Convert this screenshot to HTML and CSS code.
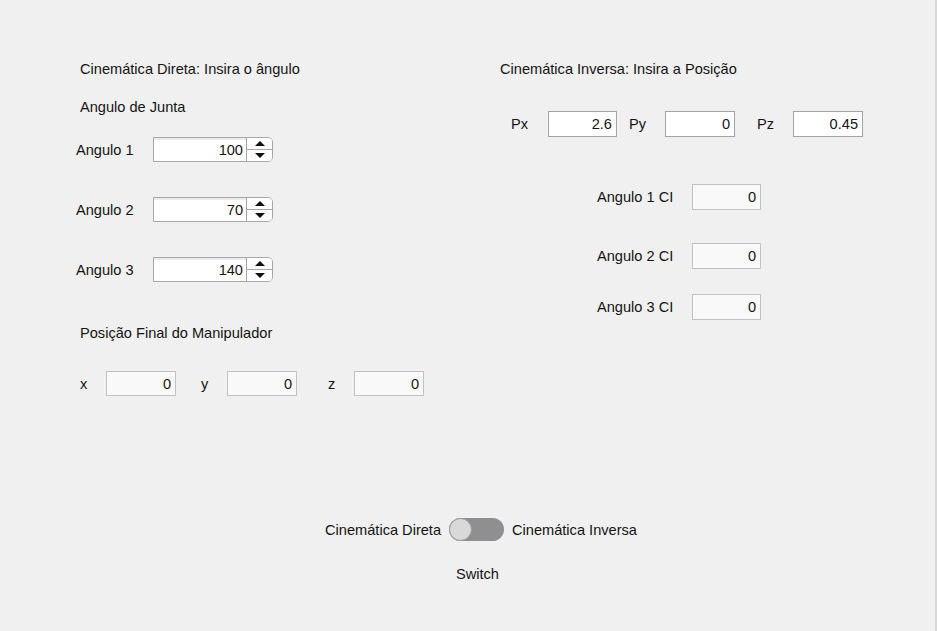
FILE: index.html
```html
<!DOCTYPE html>
<html lang="pt">
<head>
<meta charset="utf-8">
<title>Cinemática</title>
<link rel="stylesheet" href="styles.css">
</head>
<body>
<div class="app">
  <div class="panels">
    <section class="left">
      <div class="heading">Cinemática Direta: Insira o ângulo</div>
      <div class="heading sub">Angulo de Junta</div>
      <div class="spin-row r1">
        <span class="spin-label">Angulo 1</span>
        <div class="spinner"><input class="spin-input" value="100"><div class="spin-btns"><span class="up"></span><span class="down"></span></div></div>
      </div>
      <div class="spin-row r2">
        <span class="spin-label">Angulo 2</span>
        <div class="spinner"><input class="spin-input" value="70"><div class="spin-btns"><span class="up"></span><span class="down"></span></div></div>
      </div>
      <div class="spin-row r2">
        <span class="spin-label">Angulo 3</span>
        <div class="spinner"><input class="spin-input" value="140"><div class="spin-btns"><span class="up"></span><span class="down"></span></div></div>
      </div>
      <div class="heading pos">Posição Final do Manipulador</div>
      <div class="xyz-row">
        <span class="xyz-label">x</span><input class="field out" value="0" readonly>
        <span class="xyz-label gy">y</span><input class="field out" value="0" readonly>
        <span class="xyz-label gz">z</span><input class="field out" value="0" readonly>
      </div>
    </section>
    <section class="right">
      <div class="heading">Cinemática Inversa: Insira a Posição</div>
      <div class="p-row">
        <span class="p-label">Px</span><input class="field edit first" value="2.6">
        <span class="p-label py">Py</span><input class="field edit" value="0">
        <span class="p-label pz">Pz</span><input class="field edit" value="0.45">
      </div>
      <div class="ci-row c1"><span class="ci-label">Angulo 1 CI</span><input class="field out" value="0" readonly></div>
      <div class="ci-row c2"><span class="ci-label">Angulo 2 CI</span><input class="field out" value="0" readonly></div>
      <div class="ci-row c3"><span class="ci-label">Angulo 3 CI</span><input class="field out" value="0" readonly></div>
    </section>
  </div>
  <div class="switch-area">
    <div class="switch-row">
      <span class="sw-text">Cinemática Direta</span>
      <span class="toggle"><span class="knob"></span></span>
      <span class="sw-text">Cinemática Inversa</span>
    </div>
    <div class="switch-name">Switch</div>
  </div>
</div>
</body>
</html>
```
FILE: styles.css
```css
* { box-sizing: border-box; }
html, body { margin: 0; padding: 0; }
body {
  font-family: "Liberation Sans", Arial, sans-serif;
  font-size: 14.6px;
  color: #141414;
  background: #f0f0f0;
}
.app {
  width: 937px;
  height: 631px;
  background: #f0f0f0;
  border-right: 2px solid #d8d8d8;
  display: flex;
  flex-direction: column;
}
.panels {
  display: flex;
  padding-top: 58px;
}
.heading { line-height: 22px; height: 22px; white-space: nowrap; }
.left { width: 421px; padding-left: 76px; }
.left .heading { padding-left: 4px; }
.left .sub { margin-top: 16px; }
.spin-row { display: flex; align-items: center; height: 25px; }
.spin-row.r1 { margin-top: 19px; }
.spin-row.r2 { margin-top: 35px; }
.spin-label { width: 77px; }
.spinner {
  display: flex;
  width: 120px;
  height: 25px;
  border: 1px solid #a6a6a6;
  border-radius: 0 5px 5px 0;
  background: #fff;
  box-shadow: inset 0 2px 0 #ececec;
}
.spin-input {
  width: 92px;
  height: 100%;
  border: 0;
  background: transparent;
  text-align: right;
  padding: 0 3px 0 0;
  font: inherit;
  color: inherit;
  outline: none;
}
.spin-btns {
  flex: 1;
  display: flex;
  flex-direction: column;
  border-left: 1px solid #a6a6a6;
  background: #fff;
  border-radius: 0 4px 4px 0;
}
.spin-btns span { flex: 1; display: flex; align-items: center; justify-content: center; }
.spin-btns .up { border-bottom: 1px solid #a6a6a6; }
.spin-btns .up::before {
  content: "";
  border-left: 5px solid transparent;
  border-right: 5px solid transparent;
  border-bottom: 5px solid #111;
}
.spin-btns .down::before {
  content: "";
  border-left: 5px solid transparent;
  border-right: 5px solid transparent;
  border-top: 5px solid #111;
}
.left .pos { margin-top: 40px; }
.xyz-row { display: flex; align-items: center; margin-top: 27px; padding-left: 4px; height: 25px; }
.xyz-label { width: 26px; flex: none; }
.xyz-label.gy { margin-left: 25px; }
.xyz-label.gz { margin-left: 31px; }
.field {
  width: 70px;
  flex: none;
  height: 25px;
  font: inherit;
  color: inherit;
  text-align: right;
  padding: 0 4px 0 0;
  outline: none;
  margin: 0;
}
.field.out { background: #f9f9f9; border: 1px solid #c2c2c2; }
.field.edit { background: #fff; border: 1px solid #a3a3a3; height: 26px; }
.right { padding-left: 79px; flex: 1; }
.p-row { display: flex; align-items: center; margin-top: 31px; padding-left: 11px; height: 26px; }
.p-label { width: 37px; flex: none; }
.p-label.py { margin-left: 12px; width: 36px; }
.p-label.pz { margin-left: 22px; width: 36px; }
.p-row .field { width: 70px; }
.p-row .field.first { width: 69px; }
.ci-row { display: flex; align-items: center; padding-left: 97px; height: 26px; }
.ci-row.c1 { margin-top: 47px; }
.ci-row.c2 { margin-top: 33px; }
.ci-row.c3 { margin-top: 25px; }
.ci-label { width: 95px; flex: none; }
.ci-row .field { width: 69px; height: 26px; }
.switch-area {
  margin-top: 122px;
  display: flex;
  flex-direction: column;
  align-items: center;
  padding-left: 27px;
}
.switch-row { display: flex; align-items: center; gap: 8px; height: 23px; }
.toggle {
  width: 55px;
  height: 23px;
  border-radius: 12px;
  background: #8f8f91;
  position: relative;
  display: block;
}
.knob {
  position: absolute;
  left: 0;
  top: 0;
  width: 23px;
  height: 23px;
  border-radius: 50%;
  background: #d9d9d9;
  border: 1px solid #9a9a9a;
}
.switch-name { margin-top: 22px; margin-right: 7px; line-height: 22px; }
```
